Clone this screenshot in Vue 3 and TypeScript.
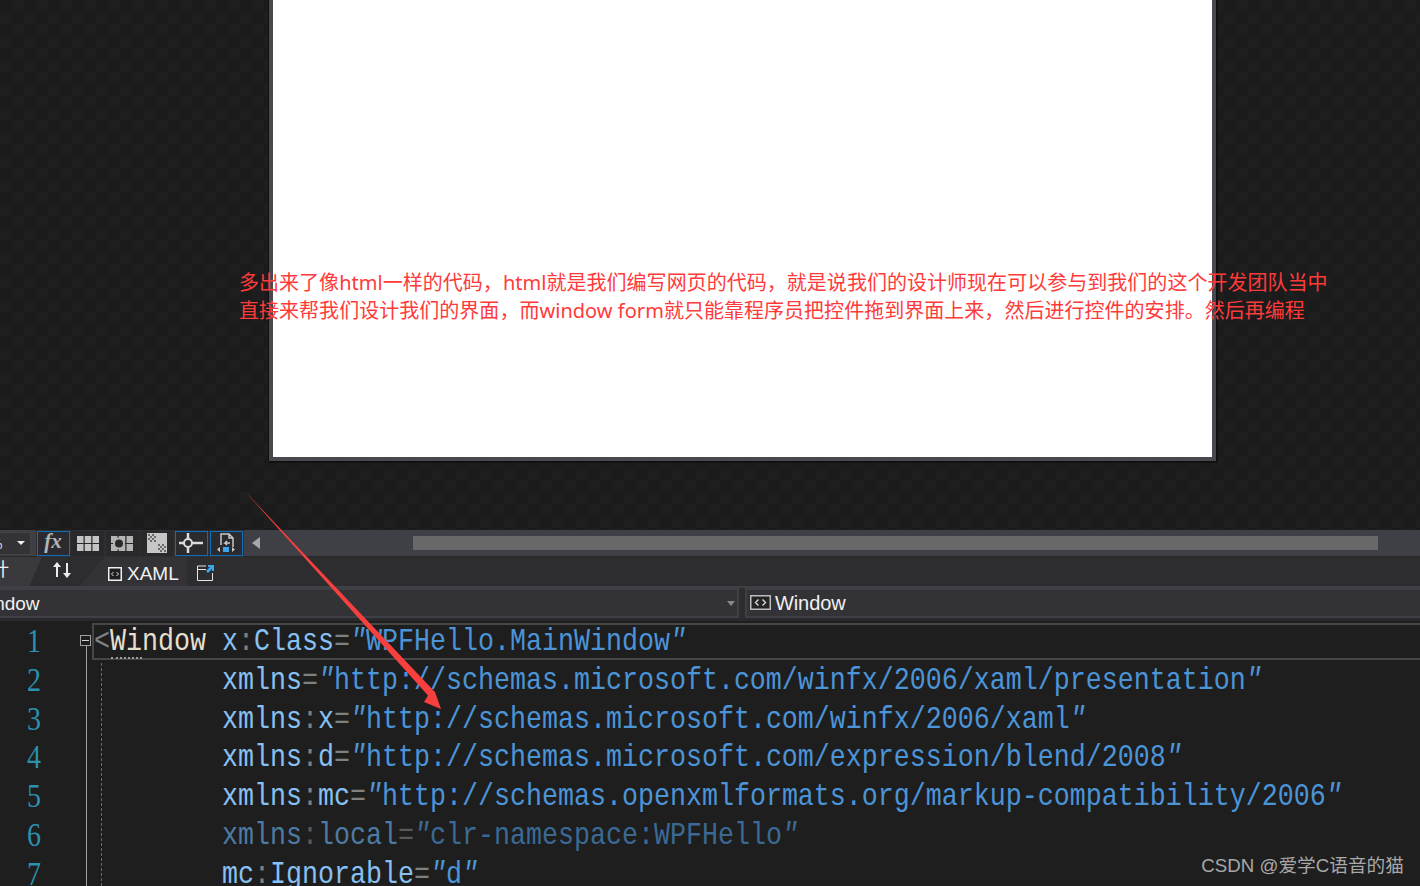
<script setup lang="ts">
interface Seg { t: string; c: string }
const q = '"'
const attr = (name: string, val: string, dim = false): Seg[] => {
  const parts = name.split(':')
  const a: Seg[] = []
  parts.forEach((p, i) => {
    if (i > 0) a.push({ t: ':', c: 'punct' })
    a.push({ t: p, c: dim ? 'attr dim' : 'attr' })
  })
  a.push({ t: '=', c: 'punct' })
  const s = dim ? 'str dim' : 'str'
  a.push({ t: q, c: s + ' quote' })
  a.push({ t: val, c: s })
  a.push({ t: q, c: s + ' quote' })
  return a
}
const lines: Seg[][] = [
  [{ t: '<', c: 'punct' }, { t: 'Window', c: 'tag' }, { t: ' ', c: '' }, ...attr('x:Class', 'WPFHello.MainWindow')],
  [{ t: '        ', c: '' }, ...attr('xmlns', 'http://schemas.microsoft.com/winfx/2006/xaml/presentation')],
  [{ t: '        ', c: '' }, ...attr('xmlns:x', 'http://schemas.microsoft.com/winfx/2006/xaml')],
  [{ t: '        ', c: '' }, ...attr('xmlns:d', 'http://schemas.microsoft.com/expression/blend/2008')],
  [{ t: '        ', c: '' }, ...attr('xmlns:mc', 'http://schemas.openxmlformats.org/markup-compatibility/2006')],
  [{ t: '        ', c: '' }, ...attr('xmlns:local', 'clr-namespace:WPFHello', true)],
  [{ t: '        ', c: '' }, ...attr('mc:Ignorable', 'd')]
]
</script>

<template>
  <div class="ide">
    <section class="canvas">
      <div class="window"></div>
    </section>

    <div class="toolbar">
      <div class="zoom-combo"><span class="zoom-val">%</span><i class="caret white"></i></div>
      <button class="tb on"><span class="fx">fx</span></button>
      <button class="tb">
        <svg width="22" height="15" viewBox="0 0 22 15"><path fill="#c4c4c4" d="M0 0h6.500v7H0zM7.750 0h6.500v7h-6.500zM15.500 0H22v7h-6.500zM0 8h6.500v7H0zM7.750 8h6.500v7h-6.500zM15.500 8H22v7h-6.500z"/></svg>
      </button>
      <button class="tb">
        <svg width="22" height="15" viewBox="0 0 22 15"><path fill="#b4b4b4" d="M0 0h6.500v7H0zM7.750 0h6.500v7h-6.500zM15.500 0H22v7h-6.500zM0 8h6.500v7H0zM7.750 8h6.500v7h-6.500zM15.500 8H22v7h-6.500z"/><circle cx="8" cy="7.500" r="5" fill="#2a2a2d" stroke="#b4b4b4" stroke-width="2"/></svg>
      </button>
      <button class="tb">
        <svg width="20" height="20" viewBox="0 0 20 20"><rect width="20" height="20" fill="#c6c6c6"/><path fill="#6a6a6a" d="M1 1h2v2H1zM5 1h2v2H5zM3 3h2v2H3zM7 3h2v2H7zM1 5h2v2H1zM5 5h2v2H5zM3 7h2v2H3zM7 7h2v2H7zM11 11h2v2h-2zM15 11h2v2h-2zM13 13h2v2h-2zM17 13h2v2h-2zM11 15h2v2h-2zM15 15h2v2h-2zM13 17h2v2h-2zM17 17h2v2h-2z"/></svg>
      </button>
      <button class="tb on">
        <svg width="24" height="20" viewBox="0 0 24 20"><circle cx="9" cy="10" r="4" fill="none" stroke="#dcdcdc" stroke-width="2"/><path stroke="#dcdcdc" stroke-width="2.500" d="M0 10h5M13 10h11M9 0v6M9 14v6"/></svg>
      </button>
      <button class="tb on">
        <svg width="22" height="22" viewBox="0 0 22 22"><path fill="none" stroke="#c8c8c8" stroke-width="1.500" d="M6 13V2h8l4 4v9M14 2v4h4"/><path fill="none" stroke="#c8c8c8" stroke-width="1.500" d="M15 11h-5l2-2M10 11l2 2"/><rect x="8" y="15" width="6" height="5" fill="#3ca6e8"/><path fill="#c8c8c8" d="M5 15v5l-3-2.500zM17 15v5l3-2.500z"/></svg>
      </button>
      <i class="tri-left"></i>
      <div class="track"><div class="thumb"></div></div>
    </div>

    <div class="tabs">
      <div class="tab-design"><span class="design-label">计</span></div>
      <svg class="swap" width="20" height="16" viewBox="0 0 20 16"><path fill="#ececec" d="M5 0l4 5H6v10H4V5H1zM14 1h2v10h3l-4 5-4-5h3z"/></svg>
      <div class="tab-xaml">
        <svg width="14" height="14" viewBox="0 0 14 14"><rect x="0.750" y="0.750" width="12.500" height="12.500" fill="#1e1e1e" stroke="#f0f0f0" stroke-width="1.500"/><path fill="none" stroke="#e0e0e0" d="M5.500 5L3.500 7l2 2M8.500 5l2 2-2 2"/></svg>
        <span>XAML</span>
      </div>
      <svg class="popout" width="17" height="16" viewBox="0 0 17 16"><path fill="none" stroke="#e6e6e6" d="M9 1H.5v14.500h15V8"/><path stroke="#e6e6e6" d="M1 4.500h8"/><path fill="#3ca6e8" d="M11 0h6v6h-2V4l-4 4-2-2 4-4h-2z"/></svg>
    </div>

    <div class="combos">
      <div class="combo left"><span class="clip-text">Window</span><i class="caret gray"></i></div>
      <div class="combo right">
        <svg width="21" height="15" viewBox="0 0 21 15"><rect x="0.750" y="0.750" width="19.500" height="13.500" fill="#252526" stroke="#bdbdbd" stroke-width="1.500"/><path fill="none" stroke="#dcdcdc" stroke-width="1.400" d="M8.500 4.500L5.500 7.500l3 3M12.500 4.500l3 3-3 3"/></svg>
        <span>Window</span>
      </div>
    </div>

    <section class="editor">
      <div class="gutter">
        <div v-for="n in 7" :key="n" class="num"><span class="tall">{{ n }}</span></div>
      </div>
      <div class="code">
        <div v-for="(l, i) in lines" :key="i" class="line"><span class="tall"><span v-for="(s, j) in l" :key="j" :class="s.c">{{ s.t }}</span></span></div>
      </div>
      <div class="current-line"></div>
      <div class="fold"></div>
      <div class="fold-line"></div>
      <div class="dash-line"></div>
      <div class="squiggle"></div>
    </section>

    <p class="note">多出来了像html一样的代码，html就是我们编写网页的代码，就是说我们的设计师现在可以参与到我们的这个开发团队当中<br>直接来帮我们设计我们的界面，而window form就只能靠程序员把控件拖到界面上来，然后进行控件的安排。然后再编程</p>

    <svg class="arrow" width="1420" height="886" viewBox="0 0 1420 886">
      <path fill="#f63f3f" d="M245 491.500L434 691 435 692 441 709 424 702 428 695.500z"/>
    </svg>

    <div class="mark">CSDN @爱学C语音的猫</div>
  </div>
</template>

<style scoped>
.ide { position: relative; width: 1420px; height: 886px; overflow: hidden; background: #1e1e1e; display: flex; flex-direction: column; font-family: "Noto Sans", "Noto Sans CJK SC", sans-serif; }
.canvas { height: 530px; flex: none; display: flex; align-items: flex-end; padding: 0 0 69px 269px; box-sizing: border-box; background-color: #1c1c1c; background-image: repeating-conic-gradient(#1e1e1e 0 25%, #1b1b1b 0 50%); background-size: 24px 24px; }
.window { width: 939px; height: 459px; flex: none; background: #fff; border: 4px solid #48484e; border-top: 0; box-shadow: 1px 1px 0 1px #111, -1px 0 0 0 #111; }
.toolbar { height: 27px; flex: none; display: flex; align-items: center; gap: 1.600px; background: #3f3f46; border-bottom: 1px solid #28282a; box-sizing: border-box; }
.zoom-combo { width: 31px; height: 23px; margin-right: 4px; background: #333337; border: 1px solid #434346; border-left: 0; box-sizing: border-box; display: flex; align-items: center; justify-content: space-between; padding-right: 5px; color: #ddd; font-size: 14px; overflow: hidden; }
.zoom-val { margin-left: -9px; }
.caret { width: 0; height: 0; border-left: 4px solid transparent; border-right: 4px solid transparent; }
.caret.white { border-top: 4px solid #f0f0f0; }
.caret.gray { border-top: 5px solid #888; }
.tb { width: 33px; height: 25px; padding: 0; flex: none; background: #29292c; border: 1px solid #29292c; box-shadow: 0 0 0 1px #2f2f33; display: flex; align-items: center; justify-content: center; }
.tb.on { border-color: #0e6fb8; background: #2b2b2f; }
.fx { font-family: "Liberation Serif", serif; font-style: italic; font-weight: 700; font-size: 21px; color: #b4b4b4; line-height: 1; margin-top: -3px; }
.tri-left { width: 0; height: 0; margin-left: 8px; border-top: 6px solid transparent; border-bottom: 6px solid transparent; border-right: 8px solid #a8a8a8; }
.track { flex: 1; padding: 0 42px 0 151px; }
.thumb { height: 14px; background: #686868; }
.tabs { height: 31px; flex: none; display: flex; align-items: center; background: #2d2d30; box-sizing: border-box; border-bottom: 2px solid #3f3f46; position: relative; }
.tab-design { width: 42px; height: 29px; background: #3a3a3e; clip-path: polygon(0 0, 100% 0, 70% 100%, 0 100%); color: #f0f0f0; font-size: 18px; overflow: hidden; }
.design-label { display: block; margin-left: -9px; line-height: 24px; }
.swap { margin-left: 10px; margin-top: -4px; }
.tab-xaml { margin-left: 8px; width: 107px; height: 29px; display: flex; align-items: center; gap: 5px; padding: 4px 0 0 28px; box-sizing: border-box; background: #333337; clip-path: polygon(24px 0, 100% 0, 100% 100%, 0 100%); color: #f0f0f0; font-size: 19px; font-family: "Liberation Sans", sans-serif; }
.popout { margin-left: 10px; margin-top: 2px; }
.combos { height: 33px; flex: none; display: flex; gap: 6px; background: #2d2d30; box-sizing: border-box; border-bottom: 3px solid #2a2a2c; }
.combo { height: 30px; background: #333337; border: 2px solid #3f3f46; box-sizing: border-box; display: flex; align-items: center; color: #f1f1f1; font-size: 18px; font-family: "Liberation Sans", sans-serif; }
.combo.left { width: 739px; border-left: 0; justify-content: space-between; padding-right: 2px; overflow: hidden; }
.clip-text { margin-left: -28px; font-size: 19px; padding-top: 1px; }
.combo.right { flex: 1; border-right: 0; gap: 4px; padding-left: 3px; font-size: 20px; }
.combo.right svg { margin-top: -2px; }
.combo.right span { padding-top: 1px; letter-spacing: -0.100px; }
.editor { flex: 1; position: relative; display: flex; background: #1e1e1e; padding-top: 3px; overflow: hidden; }
.gutter { width: 94px; flex: none; box-sizing: border-box; }
.num, .line { height: 38.800px; line-height: 38.800px; white-space: pre; font-family: "Liberation Mono", monospace; font-size: 26.670px; }
.num { padding-left: 27px; color: #2b91af; font-size: 28px; font-family: "Liberation Serif", serif; }
.tall { display: inline-block; transform: scaleY(1.200); transform-origin: 0 70%; }
.code { flex: 1; }
.tag { color: #e6dfcc; }
.punct { color: #808080; }
.attr { color: #87c0f2; }
.str { color: #4c94d8; }
.quote { font-style: italic; }
.attr.dim { color: #4d7ba3; }
.str.dim { color: #3a6a94; }
.punct:has(+ .dim) { color: #5a5a5a; }
.current-line { position: absolute; left: 92px; right: -4px; top: 2px; height: 37px; border: 2px solid #464646; box-sizing: border-box; }
.fold { position: absolute; left: 80px; top: 14px; width: 11px; height: 11px; box-sizing: border-box; border: 1px solid #a0a0a0; background: linear-gradient(#d0d0d0, #d0d0d0) center / 7px 1px no-repeat #1e1e1e; }
.fold-line { position: absolute; left: 86px; top: 25px; bottom: 0; width: 1px; background: #a0a0a0; }
.dash-line { position: absolute; left: 101px; top: 42px; bottom: 0; border-left: 1px dashed #6a6a6a; }
.squiggle { position: absolute; left: 111px; top: 36px; width: 31px; border-top: 2px dotted #9a9a9a; }
.note { position: absolute; left: 239px; top: 269px; margin: 0; white-space: nowrap; color: #ff3a3a; font-size: 20px; line-height: 28px; letter-spacing: 0.030px; font-family: "Noto Sans", "Noto Sans CJK SC", sans-serif; }
.arrow { position: absolute; left: 0; top: 0; pointer-events: none; }
.mark { position: absolute; right: 16px; bottom: 7px; color: #a8a8a8; font-size: 18.700px; line-height: 26px; font-family: "Liberation Sans", "Noto Sans CJK SC", sans-serif; }
</style>
